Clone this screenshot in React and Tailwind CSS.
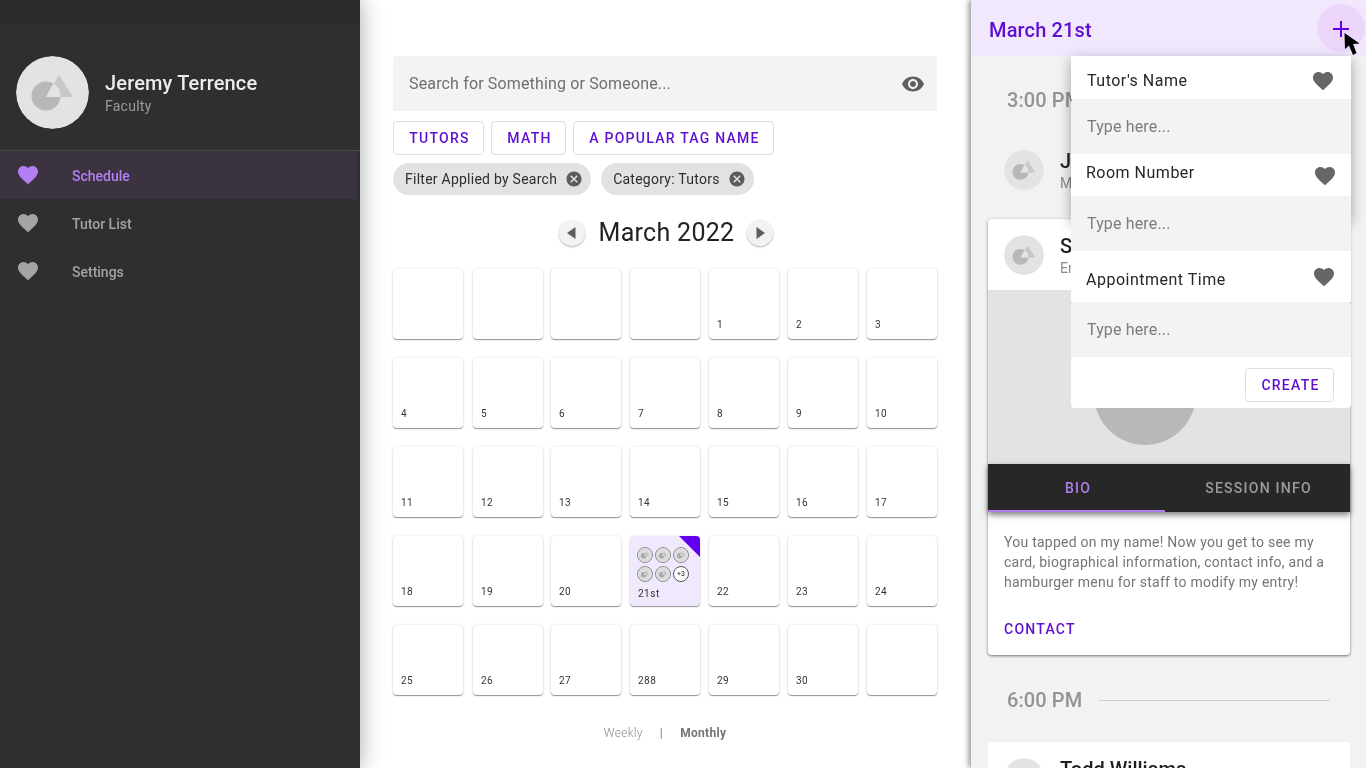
import React from 'react';

const HEART = 'M12 21.35l-1.45-1.32C5.4 15.36 2 12.28 2 8.5 2 5.42 4.42 3 7.5 3c1.74 0 3.34.81 4.5 2.09C13.16 3.81 14.76 3 16.5 3 19.58 3 22 5.42 22 8.5c0 3.78-3.4 6.86-8.55 11.54L12 21.35z';

const Heart = ({ className }) => (
  <svg viewBox="0 0 24 24" className={`w-6 h-6 shrink-0 ${className}`} fill="currentColor">
    <path d={HEART} />
  </svg>
);

// grey circle + triangle placeholder used for every avatar
const Placeholder = ({ className, bg = '#e3e3e3', circle = '#b8b8b8', tri = '#c8c8c8' }) => (
  <svg viewBox="0 0 73 73" className={`rounded-full shrink-0 ${className}`}>
    <circle cx="36.5" cy="36.5" r="36.5" fill={bg} />
    <circle cx="30" cy="40" r="14.5" fill={circle} />
    <polygon points="43,19 57,41 30,41" fill={tri} />
    <path d="M37.2 27.5 L30 41 L44.4 41 A14.5 14.5 0 0 0 37.2 27.5 Z" fill={bg} />
  </svg>
);

const NavItem = ({ label, active }) => (
  <div className={`flex items-center h-12 ${active ? 'bg-[#3c3340] mr-[3px] text-[#b57ef5]' : 'text-[#a3a3a3]'}`}>
    <Heart className="ml-4" />
    <span className="ml-8 mt-[2px] text-sm font-medium">{label}</span>
  </div>
);

const Sidebar = () => (
  <div className="relative z-20 w-[360px] shrink-0 bg-[#2f2f2f] flex flex-col">
    <div className="h-6 bg-[#2a2a2a]" />
    <div className="h-[127px] flex items-center pl-4 pt-[11px] border-b border-[#474747]">
      <Placeholder className="w-[73px] h-[73px]" />
      <div className="ml-4 mt-[2px]">
        <div className="text-xl leading-6 font-medium tracking-[0.15px] text-[#ececec]">Jeremy Terrence</div>
        <div className="text-sm leading-5 mt-[1px] tracking-[0.25px] text-[#9c9c9c]">Faculty</div>
      </div>
    </div>
    <NavItem label="Schedule" active />
    <NavItem label="Tutor List" />
    <NavItem label="Settings" />
  </div>
);

const OutlineButton = ({ children, className = '' }) => (
  <button className={`h-[34px] pl-[2px] border border-[#dedede] rounded bg-white text-sm font-medium tracking-[1.25px] text-[#5c0fd0] ${className}`}>
    {children}
  </button>
);

const Chip = ({ label }) => (
  <div className="flex items-center h-8 pl-3 pr-2 rounded-full bg-[#e2e2e2] text-sm tracking-[0.25px] text-[#2e2e2e]">
    {label}
    <svg viewBox="0 0 24 24" className="w-[18px] h-[18px] ml-[8px]" fill="#5c5c5c">
      <path d="M12 2C6.47 2 2 6.47 2 12s4.47 10 10 10 10-4.47 10-10S17.53 2 12 2zm5 13.59L15.59 17 12 13.41 8.41 17 7 15.59 10.59 12 7 8.41 8.41 7 12 10.59 15.59 7 17 8.41 13.41 12 17 15.59z" />
    </svg>
  </div>
);

const ArrowButton = ({ points }) => (
  <button className="w-[26px] h-[26px] rounded-full bg-[#f2f2f2] shadow-[0_1px_2px_rgba(0,0,0,0.3)] flex items-center justify-center">
    <svg viewBox="0 0 14 14" className="w-[14px] h-[14px]" fill="#5f5f5f">
      <polygon points={points} />
    </svg>
  </button>
);

const weeks = [
  ['', '', '', '', '1', '2', '3'],
  ['4', '5', '6', '7', '8', '9', '10'],
  ['11', '12', '13', '14', '15', '16', '17'],
  ['18', '19', '20', '21st', '22', '23', '24'],
  ['25', '26', '27', '288', '29', '30', ''],
];

const cellShadow = 'shadow-[0_1px_1px_rgba(0,0,0,0.4),0_0_3px_rgba(0,0,0,0.12)]';

const DayCell = ({ day }) => {
  if (day === '21st') {
    return (
      <div className={`relative w-[70px] h-[70px] rounded bg-[#f0e8fd] overflow-hidden pl-[7px] pt-[11px] ${cellShadow}`}>
        <svg viewBox="0 0 21 21" className="absolute top-0 right-0 w-[21px] h-[21px]" fill="#6200ee">
          <polygon points="0,0 21,0 21,21" />
        </svg>
        <div className="grid grid-cols-3 w-[54px] gap-y-[3px]">
          {[0, 1, 2, 3, 4].map((i) => (
            <div key={i} className="w-4 h-4 rounded-full border border-[#8a8a8a] overflow-hidden">
              <Placeholder className="w-full h-full" bg="#dcdcdc" circle="#a8a8a8" tri="#bcbcbc" />
            </div>
          ))}
          <div className="w-4 h-4 rounded-full border border-[#555] bg-white flex items-center justify-center text-[7px] leading-none text-[#222]">+3</div>
        </div>
        <div className="mt-[5px] ml-[1px] text-[10px] leading-[14px] tracking-[0.5px] text-[#333]">21st</div>
      </div>
    );
  }
  return (
    <div className={`w-[70px] h-[70px] rounded bg-white flex items-end pl-2 pb-[8px] ${cellShadow}`}>
      <span className="text-[10px] leading-3 tracking-[0.5px] text-[#333]">{day}</span>
    </div>
  );
};

const Main = () => (
  <div className="flex-1 min-w-0 bg-white pl-[33px] pr-[34px] pt-14 flex flex-col">
    <div className="h-[55px] shrink-0 rounded-t bg-[#f3f3f3] flex items-center justify-between pl-4 pr-3">
      <span className="text-base tracking-[0.15px] text-[#6f6f6f]">Search for Something or Someone...</span>
      <svg viewBox="0 0 24 24" className="w-6 h-6" fill="#5f5f5f">
        <path d="M12 4.5C7 4.5 2.73 7.61 1 12c1.73 4.39 6 7.5 11 7.5s9.27-3.11 11-7.5c-1.73-4.39-6-7.5-11-7.5zM12 17c-2.76 0-5-2.24-5-5s2.24-5 5-5 5 2.24 5 5-2.24 5-5 5zm0-8c-1.66 0-3 1.34-3 3s1.34 3 3 3 3-1.34 3-3-1.34-3-3-3z" />
      </svg>
    </div>
    <div className="flex gap-[7px] mt-[10px]">
      <OutlineButton className="w-[91px]">TUTORS</OutlineButton>
      <OutlineButton className="w-[75px]">MATH</OutlineButton>
      <OutlineButton className="w-[201px]">A POPULAR TAG NAME</OutlineButton>
    </div>
    <div className="flex gap-[10px] mt-2">
      <Chip label="Filter Applied by Search" />
      <Chip label="Category: Tutors" />
    </div>
    <div className="flex items-center justify-center gap-[13px] mt-[21px] h-[34px] pl-[2px]">
      <ArrowButton points="10.5,1 10.5,13 2,7" />
      <span className="ml-px text-[25px] leading-8 text-[#222] tracking-[0.3px]">March 2022</span>
      <ArrowButton points="3.5,1 3.5,13 12,7" />
    </div>
    <div className="flex flex-col gap-[19px] mt-[19px]">
      {weeks.map((week, w) => (
        <div key={w} className="grid grid-cols-[80px_78px_79px_79px_79px_79px_70px]">
          {week.map((day, d) => (
            <DayCell key={d} day={day} />
          ))}
        </div>
      ))}
    </div>
    <div className="flex justify-center items-center mt-[30px] text-xs tracking-[0.3px] text-[#8a8a8a]">
      <span className="font-light">Weekly</span>
      <span className="mx-[17px] font-medium">|</span>
      <span className="font-bold text-[#757575]">Monthly</span>
    </div>
  </div>
);

const TimeRow = ({ time, className = '' }) => (
  <div className={`flex items-center px-9 ${className}`}>
    <span className="w-[75px] text-xl font-medium tracking-[0.1px] text-[#939393] whitespace-nowrap">{time}</span>
    <div className="flex-1 h-px bg-[#cfcfcf] ml-[17px]" />
  </div>
);

const PersonHead = ({ name, sub, bg }) => (
  <div className={`flex items-center h-[71px] pl-4 shrink-0 ${bg}`}>
    <Placeholder className="w-10 h-10" />
    <div className="ml-4">
      <div className="text-xl leading-[26px] font-medium text-[#1f1f1f]">{name}</div>
      <div className="text-sm leading-[18px] text-[#8a8a8a]">{sub}</div>
    </div>
  </div>
);

const Field = ({ label, labelClass, heartClass, rowClass }) => (
  <>
    <div className={`flex justify-between bg-white ${rowClass}`}>
      <span className={`text-base tracking-[0.5px] text-[#262626] ${labelClass}`}>{label}</span>
      <Heart className={`text-[#666666] ${heartClass}`} />
    </div>
    <div className="h-[55px] rounded-t bg-[#f3f3f3] flex items-center pl-4 text-base tracking-[0.15px] text-[#7c7c7c]">
      Type here...
    </div>
  </>
);

const CreateMenu = () => (
  <div className="absolute z-10 top-14 left-[100px] w-[280px]">
    <div className="absolute inset-x-0 top-0 h-[164px] shadow-[0_4px_12px_rgba(0,0,0,0.35)]" />
    <div className="relative rounded-b overflow-hidden">
      <Field label="Tutor's Name" rowClass="h-[43px] items-center pt-[6px] pl-4 pr-4" />
      <Field label="Room Number" rowClass="h-[42px] items-start pl-[15px] pr-[14px]" labelClass="mt-[7px]" heartClass="mt-[10px]" />
      <Field label="Appointment Time" rowClass="h-[51px] items-center pl-[15px] pr-[15px]" labelClass="mt-[6px]" heartClass="mt-[1px]" />
      <div className="h-[51px] bg-white flex items-start justify-end pt-[11px] pr-[17px]">
        <OutlineButton className="w-[89px]">CREATE</OutlineButton>
      </div>
    </div>
  </div>
);

const Panel = () => (
  <div className="relative z-10 w-[395px] shrink-0 bg-[#f2f2f2] flex flex-col shadow-[-2px_0_6px_rgba(0,0,0,0.45)]">
    <div className="h-14 shrink-0 bg-[#f2e8fd] flex items-center justify-between pl-[18px]">
      <span className="mt-1 text-xl font-medium tracking-[0.15px] text-[#5c0fd0]">March 21st</span>
      <div className="w-12 h-12 mr-[1px] rounded-full bg-[#ecd6fb] flex items-center justify-center">
        <svg viewBox="0 0 18 18" className="mt-[2px] w-[18px] h-[18px]" stroke="#6200ee" strokeWidth="2" fill="none">
          <path d="M9 1v16M1 9h16" />
        </svg>
      </div>
    </div>

    <div className="flex-1 min-h-0 overflow-hidden flex flex-col">
      <TimeRow time="3:00 PM" className="h-7 mt-[30px] shrink-0" />
      <div className="ml-[17px] mr-4 mt-5 shrink-0">
        <PersonHead name="Jeremy Terrence" sub="Math" bg="" />
      </div>
      <div className="ml-[17px] mr-4 mt-[14px] shrink-0 rounded bg-white shadow-[0_1px_3px_rgba(0,0,0,0.55)] flex flex-col">
        <PersonHead name="Sarah Jones" sub="English" bg="rounded-t bg-white" />
        <svg viewBox="0 0 362 174" className="w-full h-[174px] block bg-[#e3e3e3]">
          <circle cx="157" cy="104" r="51" fill="#b8b8b8" />
        </svg>
        <div className="h-12 flex bg-[#272727] shadow-[0_3px_6px_rgba(0,0,0,0.5)] text-sm font-medium tracking-[1.25px]">
          <div className="w-[177px] flex items-center justify-center pl-[3px] pt-[2px] border-b-2 border-[#b07fe8] text-[#b07fe8]">BIO</div>
          <div className="flex-1 flex items-center justify-center pl-[2px] text-[#9c9c9c]">SESSION INFO</div>
        </div>
        <p className="px-4 pt-5 text-sm leading-5 tracking-[0.25px] text-[#757575]">
          You tapped on my name! Now you get to see my card, biographical information, contact info, and a hamburger menu for staff to modify my entry!
        </p>
        <div className="px-4 pt-[27px] pb-4 text-sm leading-5 font-medium tracking-[1.25px] text-[#5c0fd0]">CONTACT</div>
      </div>
      <TimeRow time="6:00 PM" className="h-7 mt-[31px] shrink-0" />
      <div className="ml-[17px] mr-4 mt-[28px] shrink-0 rounded bg-white">
        <PersonHead name="Todd Williams" sub="Math" bg="rounded-t bg-white" />
      </div>
    </div>

    <CreateMenu />

    {/* mouse pointer from the capture */}
    <svg viewBox="0 0 18 24" className="absolute z-20 top-[32px] left-[373px] w-[18px] h-6" fill="#000000">
      <path d="M0.5 1 L1 17 L5 13.5 L9 23 L12.5 21 L9 12 L15.5 11.5 Z" />
    </svg>
  </div>
);

export default function App() {
  return (
    <div className="flex w-[1366px] h-[768px] overflow-hidden font-['Roboto',sans-serif] bg-white will-change-transform">
      <div className="relative z-20 flex shadow-[0_0_22px_rgba(0,0,0,0.35)]">
        <Sidebar />
      </div>
      <Main />
      <Panel />
    </div>
  );
}
